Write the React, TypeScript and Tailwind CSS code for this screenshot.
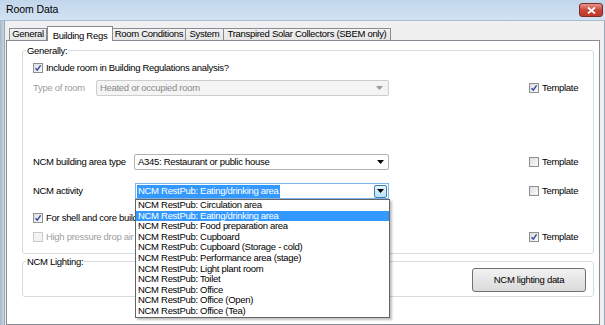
import React from "react"

const activities = [
  "NCM RestPub: Circulation area",
  "NCM RestPub: Eating/drinking area",
  "NCM RestPub: Food preparation area",
  "NCM RestPub: Cupboard",
  "NCM RestPub: Cupboard (Storage - cold)",
  "NCM RestPub: Performance area (stage)",
  "NCM RestPub: Light plant room",
  "NCM RestPub: Toilet",
  "NCM RestPub: Office",
  "NCM RestPub: Office (Open)",
  "NCM RestPub: Office (Tea)",
]

const tabs = [
  { label: "General", w: "w-[38px]" },
  { label: "Building Regs", w: "w-[66px]", active: true },
  { label: "Room Conditions", w: "w-[74px]" },
  { label: "System", w: "w-[39px]" },
  { label: "Transpired Solar Collectors (SBEM only)", w: "w-[168px]" },
]

function Arrow({ color = "#000" }: { color?: string }) {
  return (
    <svg width="7" height="4" viewBox="0 0 7 4">
      <path d="M0 0H7L3.5 4Z" fill={color} />
    </svg>
  )
}

function Check({ checked = false, disabled = false }: { checked?: boolean; disabled?: boolean }) {
  return (
    <span
      className={`flex h-[10px] w-[10px] shrink-0 items-center justify-center border ${
        disabled ? "border-[#c9c9c9] bg-[#f3f3f3]" : "border-[#8e8f8f] bg-gradient-to-br from-[#dedede] to-[#fbfbfb]"
      }`}
    >
      {checked && (
        <svg width="8" height="8" viewBox="0 0 8 8">
          <path d="M1.5 4.2L3.3 6.2L6.6 1.4" stroke="#2c4a9a" strokeWidth="1.4" fill="none" />
        </svg>
      )}
    </span>
  )
}

function Template({ checked = false }: { checked?: boolean }) {
  return (
    <div className="ml-auto flex w-[60px] items-center gap-[3px]">
      <Check checked={checked} />
      <span>Template</span>
    </div>
  )
}

export default function App() {
  return (
    <div className="flex h-[325px] w-[605px] flex-col overflow-hidden bg-[#f0f0f0] font-['Liberation_Sans',Arial,sans-serif] text-[9.5px] tracking-[-0.3px] text-black">
      {/* title bar */}
      <div className="flex h-[21px] shrink-0 border-b border-[#a9bccf] bg-gradient-to-b from-[#c2d6eb] to-[#d2e2f3] pl-[6px] pr-[2px]">
        <span className="self-center text-[10.5px] tracking-[-0.1px]">Room Data</span>
        <div className="ml-auto mt-[3px] flex h-[14px] w-[24px] items-center justify-center rounded-[3px] border border-[#7e2d24] bg-gradient-to-b from-[#e3958b] via-[#c9463a] to-[#c0392b]">
          <svg width="9" height="7" viewBox="0 0 9 7">
            <path d="M1 0.5L8 6.5M8 0.5L1 6.5" stroke="#fff" strokeWidth="1.8" />
          </svg>
        </div>
      </div>

      <div className="flex flex-1">
        <div className="w-[5px] border-r border-[#9aa7b5] bg-gradient-to-r from-[#a9b8c8] to-[#c6d4e3]" />
        <div className="flex flex-1 flex-col pl-[1px] pr-[4px] pt-[5px]">
          {/* tabs */}
          <div className="relative z-10 -mb-px ml-[3px] flex h-[15px] items-end">
            {tabs.map((t) =>
              t.active ? (
                <div
                  key={t.label}
                  className={`${t.w} flex h-[15px] justify-center border-x border-t border-[#898c95] bg-white pt-[2px]`}
                >
                  {t.label}
                </div>
              ) : (
                <div
                  key={t.label}
                  className={`${t.w} -ml-px flex h-[13px] items-center justify-center border border-[#898c95] bg-gradient-to-b from-[#f2f2f2] to-[#e5e5e5] first:ml-0`}
                >
                  {t.label}
                </div>
              )
            )}
          </div>

          {/* panel */}
          <div className="flex flex-1 flex-col border border-[#898c95] bg-white pl-[15px] pr-[5px] pt-[4px]">
            <fieldset className="rounded-[3px] border border-[#d5dbe0]">
              <legend className="ml-[3px] px-[1px] leading-[11px]">Generally:</legend>
              <div className="flex flex-col pl-[10px] pr-[4px] pb-[10px]">
                <div className="mt-[6px] flex h-[12px] items-center gap-[3px]">
                  <Check checked />
                  <span>Include room in Building Regulations analysis?</span>
                </div>

                <div className="mt-[6px] flex h-[16px] items-center">
                  <span className="w-[63px] text-[#9c9c9c]">Type of room</span>
                  <div className="flex h-[16px] w-[293px] items-center justify-between rounded-[2px] border border-[#cdcdcd] bg-[#f4f4f4] pl-[3px] pr-[5px] text-[#8a8a8a]">
                    <span>Heated or occupied room</span>
                    <Arrow color="#9a9a9a" />
                  </div>
                  <Template checked />
                </div>

                <div className="mt-[58px] flex h-[16px] items-center">
                  <span className="w-[101px]">NCM building area type</span>
                  <div className="flex h-[16px] w-[255px] items-center justify-between rounded-[2px] border border-[#b2b2b2] bg-white pl-[3px] pr-[4px]">
                    <span>A345: Restaurant or public house</span>
                    <Arrow />
                  </div>
                  <Template />
                </div>

                <div className="mt-[13px] flex h-[16px] items-center">
                  <span className="w-[102px]">NCM activity</span>
                  <div className="relative z-20 flex h-[16px] w-[254px] items-center justify-between border border-[#7eb4ea] bg-white pl-px pr-px">
                    <span className="flex h-[13px] items-center bg-[#3399ff] px-px text-white">
                      NCM RestPub: Eating/drinking area
                    </span>
                    <div className="flex h-[13px] w-[13px] items-center justify-center rounded-[2px] border border-[#3c7fb1] bg-gradient-to-b from-[#eaf6fd] to-[#b7dff8]">
                      <Arrow />
                    </div>
                    <div className="absolute left-[-1px] top-full mt-px w-[255px] border border-[#646464] bg-white shadow-[2px_2px_2px_rgba(0,0,0,0.25)]">
                      {activities.map((a, i) => (
                        <div
                          key={a}
                          className={`h-[10.6px] whitespace-nowrap pl-[2px] leading-[10.6px] ${
                            i === 1 ? "bg-[#3399ff] text-white" : ""
                          }`}
                        >
                          {a}
                        </div>
                      ))}
                    </div>
                  </div>
                  <Template />
                </div>

                <div className="mt-[13px] flex h-[12px] items-center gap-[3px]">
                  <Check checked />
                  <span className="w-[89px] overflow-hidden whitespace-nowrap">For shell and core buildings only</span>
                </div>

                <div className="mt-[7px] flex h-[12px] items-center">
                  <div className="flex items-center gap-[3px] text-[#a0a0a0]">
                    <Check disabled />
                    <span className="w-[89px] overflow-hidden whitespace-nowrap">High pressure drop air terminals</span>
                  </div>
                  <Template checked />
                </div>
              </div>
            </fieldset>

            <fieldset className="mt-[2px] rounded-[3px] border border-[#d5dbe0]">
              <legend className="ml-[3px] px-[1px] leading-[11px]">NCM Lighting:</legend>
              <div className="flex justify-end pb-[4px] pr-[7px] pt-px">
                <button className="flex h-[24px] w-[114px] items-center justify-center rounded-[3px] border border-[#707070] bg-gradient-to-b from-[#f2f2f2] to-[#dadada]">
                  NCM lighting data
                </button>
              </div>
            </fieldset>
          </div>
        </div>
        <div className="w-[1px] bg-[#9aa7b5]" />
      </div>
    </div>
  )
}
